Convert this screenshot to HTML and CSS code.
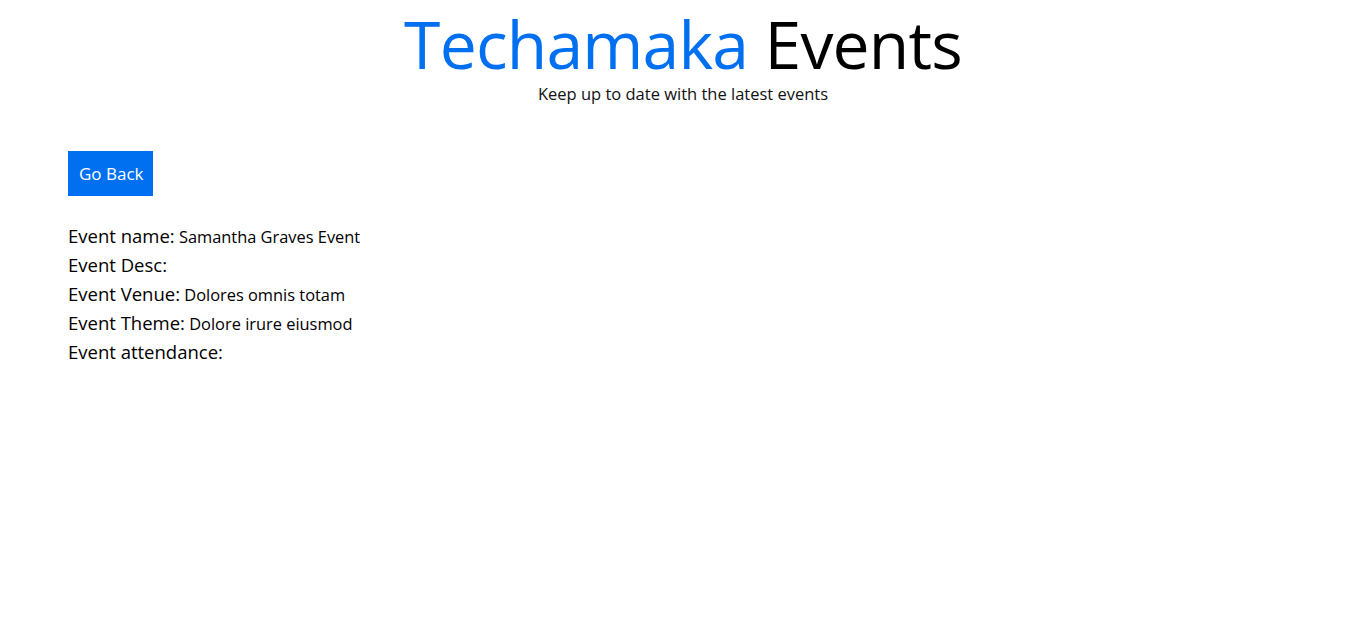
FILE: index.html
```html
<!DOCTYPE html>
<html lang="en">
<head>
<meta charset="utf-8">
<title>Techamaka Events</title>
<link rel="stylesheet" href="styles.css">
</head>
<body>
<header class="hero">
  <h1 class="hero-title"><span class="brand">Techamaka</span> Events</h1>
  <p class="hero-sub">Keep up to date with the latest events</p>
</header>
<main class="content">
  <button class="btn-back" type="button">Go Back</button>
  <div class="details">
    <div class="row"><span class="label">Event name:</span> <span class="value">Samantha Graves Event</span></div>
    <div class="row"><span class="label">Event Desc:</span> <span class="value"></span></div>
    <div class="row"><span class="label">Event Venue:</span> <span class="value">Dolores omnis totam</span></div>
    <div class="row"><span class="label">Event Theme:</span> <span class="value">Dolore irure eiusmod</span></div>
    <div class="row"><span class="label">Event attendance:</span> <span class="value"></span></div>
  </div>
</main>
</body>
</html>
```
FILE: styles.css
```css
* { box-sizing: border-box; }
html, body { margin: 0; padding: 0; background: #fff; }
body {
  font-family: "Segoe UI", "Open Sans", "Noto Sans", sans-serif;
  color: #000;
}
.hero { text-align: center; padding-top: 1px; }
.hero-title {
  margin: 0;
  font-size: 66px;
  font-weight: 400;
  line-height: 84px;
  letter-spacing: -0.8px;
}
.brand { color: #0070f0; }
.hero-sub {
  margin: 0;
  font-size: 16.5px;
  line-height: 18px;
  color: #111;
}
.content { padding: 48px 68px 0; }
.btn-back {
  display: block;
  background: #0070f0;
  color: #fff;
  border: none;
  border-radius: 0;
  font-family: inherit;
  font-size: 17px;
  height: 45px;
  padding: 0 9px 0 11px;
  margin: 0;
  cursor: pointer;
}
.details { margin-top: 25px; }
.row { font-size: 16.4px; line-height: 29px; height: 29px; }
.label { font-size: 18.5px; line-height: 29px; }
```
